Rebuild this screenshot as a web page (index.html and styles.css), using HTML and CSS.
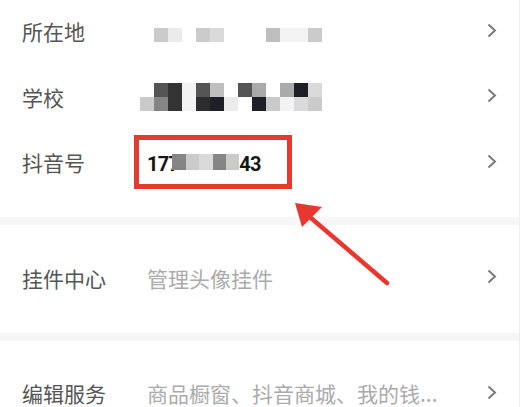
FILE: index.html
```html
<!DOCTYPE html>
<html lang="zh-CN">
<head>
    <meta charset="UTF-8">
    <title>编辑资料</title>
    <link rel="stylesheet" href="styles.css">
</head>
<body>
<div id="page">
    <div class="group first">
        <div class="row">
            <span class="label">所在地</span>
            <div class="value">
                <div class="mosaic one">
                    <i></i><i class="g8"></i><i class="g10"></i><i></i><i class="g8"></i><i class="g9"></i><i></i><i></i><i></i><i class="g7"></i><i class="g11"></i><i class="g11"></i><i class="g8"></i>
                </div>
            </div>
            <svg class="arrow" viewBox="0 0 10 15"><polyline points="1.5,1.5 8,7.5 1.5,13.5"/></svg>
        </div>
        <div class="row">
            <span class="label">学校</span>
            <div class="value">
                <div class="mosaic two">
                    <i></i><i class="g4"></i><i class="g3"></i><i class="g11"></i><i class="g4"></i><i class="g7"></i><i></i><i class="g4"></i><i class="g6"></i><i></i><i class="g6"></i><i class="g1"></i><i class="g9"></i>
                    <i class="g8"></i><i class="g5"></i><i class="g3"></i><i class="g11"></i><i class="g2"></i><i class="g1"></i><i class="g10"></i><i></i><i class="g1"></i><i class="g8"></i><i class="g11"></i><i class="g9"></i><i class="g8"></i>
                </div>
            </div>
            <svg class="arrow" viewBox="0 0 10 15"><polyline points="1.5,1.5 8,7.5 1.5,13.5"/></svg>
        </div>
        <div class="row">
            <span class="label">抖音号</span>
            <div class="value id">
                <span>177</span><span class="blur"><i class="g5"></i><i class="g8"></i><i class="g9"></i><i class="g5"></i><i class="g8"></i></span><span>43</span>
            </div>
            <svg class="arrow" viewBox="0 0 10 15"><polyline points="1.5,1.5 8,7.5 1.5,13.5"/></svg>
        </div>
    </div>
    <div class="group">
        <div class="row">
            <span class="label">挂件中心</span>
            <div class="value hint">管理头像挂件</div>
            <svg class="arrow" viewBox="0 0 10 15"><polyline points="1.5,1.5 8,7.5 1.5,13.5"/></svg>
        </div>
    </div>
    <div class="group">
        <div class="row">
            <span class="label">编辑服务</span>
            <div class="value hint">商品橱窗、抖音商城、我的钱...</div>
            <svg class="arrow" viewBox="0 0 10 15"><polyline points="1.5,1.5 8,7.5 1.5,13.5"/></svg>
        </div>
    </div>

    <!-- 标注：红框和箭头 -->
    <div class="mark"></div>
    <svg class="pointer" viewBox="0 0 520 407">
        <line x1="387" y1="283" x2="304" y2="212"/>
        <polygon points="295,203 322,207 302,227"/>
    </svg>
</div>
</body>
</html>
```

FILE: styles.css
```css
body,div,span{margin:0;padding:0;}
body{background:#fff;color:#555;font:21px/1.1 "Noto Sans CJK SC","Noto Sans",sans-serif;overflow:hidden;}
#page{position:relative;width:519px;height:407px;border-right:1px solid #eee;overflow:hidden;}
.group{padding:20.5px 0 21.5px;border-bottom:8px solid #f6f6f6;}
.group.first{padding-top:0;margin-top:-1px;}
.row{display:flex;align-items:center;height:65.5px;padding:0 22px;}
.label{flex:0 0 125px;color:#555;}
.value{flex:1;display:flex;align-items:center;}
.hint{color:#ababab;}
.arrow{width:10px;height:15px;margin-top:-3px;fill:none;stroke:#777;stroke-width:1.9;}

.mosaic{display:grid;grid-template-columns:repeat(13,14px);grid-auto-rows:14px;margin-left:-7px;}
.mosaic.one{margin-top:6px;}
.id{font-family:Roboto,"Noto Sans",sans-serif;font-weight:bold;font-size:20px;letter-spacing:-0.7px;color:#161616;margin-top:2px;}
.blur{display:flex;margin-left:-7px;margin-top:-3px;}
.blur i{width:13.4px;height:16px;}

.g1{background:#1f1f27;}
.g2{background:#2c2c2e;}
.g3{background:#333;}
.g4{background:#555;}
.g5{background:#858585;}
.g6{background:#aaa;}
.g7{background:#bfbfbf;}
.g8{background:#cbcbcb;}
.g9{background:#dadada;}
.g10{background:#ebebeb;}
.g11{background:#f3f3f3;}

.mark{position:absolute;left:134px;top:135px;width:148px;height:44px;border:5px solid #e53a30;}
.pointer{position:absolute;left:0;top:0;width:520px;height:407px;pointer-events:none;}
.pointer line{stroke:#e8372e;stroke-width:4.5;stroke-linecap:round;}
.pointer polygon{fill:#e8372e;}
```
